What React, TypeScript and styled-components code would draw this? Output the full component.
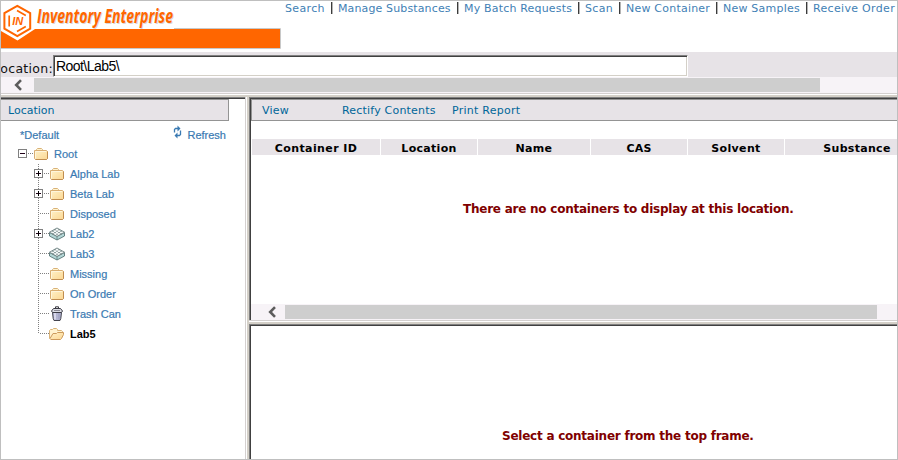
import React from "react";
import styled, { createGlobalStyle } from "styled-components";

const GlobalStyle = createGlobalStyle`
  * { box-sizing: border-box; }
  html, body { margin: 0; padding: 0; }
  body { background: #fff; overflow: hidden; }
`;

const verdana = `Verdana, "DejaVu Sans", sans-serif`;
const arial = `"Liberation Sans", Arial, sans-serif`;

const Window = styled.div`
  width: 898px;
  height: 460px;
  border: 1px solid #bfbfbf;
  background: #fff;
  display: flex;
  flex-direction: column;
  overflow: hidden;
  font-family: ${verdana};
  font-size: 11px;
`;

const Header = styled.header`
  height: 51px;
  flex: none;
  display: flex;
  justify-content: space-between;
`;

const Brand = styled.svg`
  display: block;
  flex: none;
`;

const Nav = styled.nav`
  display: flex;
  height: 14px;
  align-items: flex-start;
  padding: 1px 1px 0 0;
`;

const NavLink = styled.a<{ $width: number; $spacing: number }>`
  width: ${(p) => p.$width}px;
  letter-spacing: ${(p) => p.$spacing}px;
  line-height: 14px;
  color: #3f7fb5;
  white-space: nowrap;
`;

const Divider = styled.span`
  width: 2px;
  height: 12px;
  margin: 0 5px 0 6px;
  background: linear-gradient(to right, #3c3c3c 50%, #b4b4b4 50%);
`;

const LocationBar = styled.div`
  height: 25px;
  flex: none;
  display: flex;
  background: #e7e3e7;
  padding-top: 3px;
`;

const FieldLabel = styled.label`
  width: 52px;
  display: flex;
  justify-content: flex-end;
  overflow: hidden;
  font-size: 12.5px;
  line-height: 27px;
  letter-spacing: 0.3px;
  white-space: nowrap;
  color: #111;
`;

const Field = styled.div`
  width: 635px;
  height: 22px;
  border: 1px solid;
  border-color: #808080 #fff #fff #808080;
  box-shadow: inset 1px 1px #404040, inset -1px -1px #d4d0c8;
  background: #fff;
  padding-left: 2px;
  font: 14px/21px ${arial};
  letter-spacing: -0.55px;
  color: #000;
`;

const ScrollTrack = styled.div<{ $lead: number }>`
  height: 16px;
  flex: none;
  display: flex;
  padding: 1px 0;
  padding-left: ${(p) => p.$lead}px;
  background: #f7f3f7;
`;

const ScrollThumb = styled.div<{ $width: number; $gap: number }>`
  width: ${(p) => p.$width}px;
  margin-left: ${(p) => p.$gap}px;
  background: #cecece;
`;

const FrameRule = styled.div`
  height: 4px;
  flex: none;
  border-top: 1px solid #d4d0cf;
  border-bottom: 2px solid #d4d0c8;
  background: #fff;
`;

const Frames = styled.main`
  flex: 1;
  min-height: 0;
  display: flex;
`;

const TreeFrame = styled.aside`
  width: 244px;
  flex: none;
  border-top: 1px solid #808080;
  box-shadow: inset 0 1px #404040;
  padding-top: 1px;
`;

const FrameSplitter = styled.div`
  width: 4px;
  flex: none;
  border-left: 1px solid #d4d0cf;
  border-right: 2px solid #d4d0c8;
  background: #fff;
`;

const RightFrames = styled.div`
  flex: 1;
  min-width: 0;
  display: flex;
  flex-direction: column;
`;

const Frame = styled.section<{ $height?: number }>`
  ${(p) => (p.$height ? `height: ${p.$height}px; flex: none;` : "flex: 1;")}
  border: solid #808080;
  border-width: 1px 0 0 1px;
  box-shadow: inset 1px 1px #404040;
  padding: 1px 0 0 1px;
  display: flex;
  flex-direction: column;
`;

const TreeTitle = styled.div`
  width: 228px;
  height: 22px;
  padding-left: 7px;
  border: solid #949494;
  border-width: 1px 1px 1px 0;
  background: #e7e3e7;
  color: #006699;
  line-height: 22px;
`;

const Toolbar = styled.div`
  height: 22px;
  flex: none;
  display: flex;
  padding-left: 10px;
  border: solid #949494;
  border-width: 1px 0 1px 1px;
  background: #e7e3e7;
  color: #006699;
  line-height: 22px;
`;

const ToolItem = styled.span<{ $width: number; $spacing: number }>`
  width: ${(p) => p.$width}px;
  letter-spacing: ${(p) => p.$spacing}px;
  white-space: nowrap;
`;

const TreeActions = styled.div`
  display: flex;
  justify-content: space-between;
  height: 23px;
  padding: 4px 19px 0 19px;
  font: 11px/20px ${arial};
  color: #3a7ab2;
  -webkit-text-stroke: 0.2px;
`;

const Action = styled.a`
  display: flex;
  gap: 5px;
`;

const Tree = styled.div`
  font: 11px/20px ${arial};
  color: #3a7ab2;
`;

const TreeRow = styled.div<{ $current?: boolean }>`
  height: 20px;
  display: flex;
  white-space: nowrap;
  padding-left: 15px;
  ${(p) => (p.$current ? "color: #000; font-weight: bold;" : "-webkit-text-stroke: 0.2px;")}
`;

const TreeArt = styled.svg<{ $gap?: number }>`
  display: block;
  flex: none;
  margin-right: ${(p) => p.$gap ?? 4}px;
`;

const HeadRow = styled.div`
  display: grid;
  grid-template-columns: 128px 96px 112px 96px 96px 144px;
  column-gap: 1px;
  height: 16px;
  margin: 18px 0 0 1px;
  flex: none;
  overflow: hidden;
`;

const HeadCell = styled.div<{ $spacing: number }>`
  background: #e7e3e7;
  text-align: center;
  font-weight: bold;
  line-height: 19px;
  letter-spacing: ${(p) => p.$spacing}px;
  color: #000;
  white-space: nowrap;
`;

const Message = styled.p<{ $top: number; $left: number; $spacing: number }>`
  margin: ${(p) => p.$top}px 0 0 ${(p) => p.$left}px;
  font-size: 12px;
  line-height: 16px;
  font-weight: bold;
  letter-spacing: ${(p) => p.$spacing}px;
  color: #800000;
  white-space: nowrap;
`;

const Spacer = styled.div`
  flex: 1;
`;

const links: [string, number, number][] = [
  ["Search", 40, 0.35],
  ["Manage Substances", 113, 0.13],
  ["My Batch Requests", 108, 0.18],
  ["Scan", 28, 0.3],
  ["New Container", 84, 0.22],
  ["New Samples", 77, 0.22],
  ["Receive Order", 83, 0.32],
];

const columns: [string, number][] = [
  ["Container ID", 0.4],
  ["Location", 0.3],
  ["Name", 0.3],
  ["CAS", 0.2],
  ["Solvent", 0.35],
  ["Substance", 0.3],
];

type Kind = "folder" | "open" | "grid" | "trash";
type Node = { label: string; kind: Kind; expandable?: boolean };

const nodes: Node[] = [
  { label: "Alpha Lab", kind: "folder", expandable: true },
  { label: "Beta Lab", kind: "folder", expandable: true },
  { label: "Disposed", kind: "folder" },
  { label: "Lab2", kind: "grid", expandable: true },
  { label: "Lab3", kind: "grid" },
  { label: "Missing", kind: "folder" },
  { label: "On Order", kind: "folder" },
  { label: "Trash Can", kind: "trash" },
  { label: "Lab5", kind: "open" },
];

const FolderShape = () => (
  <g>
    <path d="M3.5 6.5V5.5L4.5 4.5H8.5L9.5 5.5V6.5" fill="#fff3cf" stroke="#d9b278" />
    <path d="M1.5 6.5H13.5L14.5 7.5V14.5L13.5 15.5H2.5L1.5 14.5Z" fill="url(#folderFill)" stroke="#d9ae72" />
    <path d="M14.5 7.5V14.5L13.5 15.5H2.5" fill="none" stroke="#c08d50" />
    <path d="M2.5 14.5V7.5H13" fill="none" stroke="#fff6dc" />
  </g>
);

const OpenShape = () => (
  <g>
    <path d="M0.5 14.5V6.5L1.5 5.5H3.5L4.5 4.5H7.5L8.5 5.5V6.5H12.5L13.5 7.5V9" fill="#fff3cf" stroke="#d9b278" />
    <path d="M1 14.5L4 9.5H7.5L8.5 8.5H14.5V10.5L12.5 14.5L11.5 15.5H1.8Z" fill="url(#folderFill)" stroke="#cc9a5c" />
  </g>
);

const GridShape = () => (
  <g>
    <path d="M0.5 8.5L8 12.5L15.5 8.5V12L8 16L0.5 12Z" fill="#b4d6d6" stroke="#587676" strokeWidth="0.9" />
    <path d="M8 12.5V16" stroke="#587676" strokeWidth="0.8" />
    <path d="M0.5 8.2L8 4L15.5 8.2L8 12.4Z" fill="#f6f9f9" stroke="#6c8080" strokeWidth="0.9" />
    <path
      d="M5 5.8h2M9 5.8h2M3 7.2h2M7 7.2h2M11 7.2h2M5 8.6h2M9 8.6h2M3 9.8h2M7 10.2h2M11 9.8h2"
      stroke="#748888"
      strokeWidth="0.9"
    />
  </g>
);

const TrashShape = () => (
  <g>
    <path d="M3.5 8.5H12.5L11.8 14.5L11 16.5H5L4.2 14.5Z" fill="#b3b5d2" stroke="#44444f" />
    <path d="M6 9V15.5" stroke="#e4e5f4" strokeWidth="1.5" />
    <path d="M10 9V15.5" stroke="#9a9cbd" />
    <path d="M2.5 7L4.5 4.5H11.5L13.5 7L12.5 8.5H3.5Z" fill="#dcdde6" stroke="#3b3b44" />
    <path d="M6.5 4.5V2.8H9.5V4.5" fill="none" stroke="#3b3b44" />
    <path d="M5 6.5H11" stroke="#8a8a96" />
  </g>
);

const shapes: Record<Kind, () => React.ReactElement> = {
  folder: FolderShape,
  open: OpenShape,
  grid: GridShape,
  trash: TrashShape,
};

const Toggle = ({ x, open }: { x: number; open?: boolean }) => (
  <g>
    <rect x={x + 0.5} y="5.5" width="8" height="8" fill="#fff" stroke="#808080" />
    <path d={`M${x + 2} 9.5h5`} stroke="#200018" />
    {!open && <path d={`M${x + 4.5} 7v5`} stroke="#000" />}
  </g>
);

const RootArt = () => (
  <TreeArt width="34" height="20" viewBox="16 0 34 20">
    <defs>
      <linearGradient id="folderFill" x1="0" y1="0" x2="1" y2="1">
        <stop offset="0" stopColor="#fff1c8" />
        <stop offset="1" stopColor="#fbd793" />
      </linearGradient>
    </defs>
    <Toggle x={18} open />
    <path d="M28 9.5h6" stroke="#808080" strokeDasharray="1 1" />
    <g transform="translate(33 0)">
      <FolderShape />
    </g>
  </TreeArt>
);

const NodeArt = ({ node, last }: { node: Node; last: boolean }) => {
  const Shape = shapes[node.kind];
  return (
    <TreeArt width="50" height="20" viewBox="16 0 50 20">
      <path d={`M38.5 0V${last ? 10 : 20}`} stroke="#808080" strokeDasharray="1 1" />
      <path d="M40 9.5h9" stroke="#808080" strokeDasharray="1 1" />
      {node.expandable && <Toggle x={34} />}
      <g transform="translate(49 0)">
        <Shape />
      </g>
    </TreeArt>
  );
};

const RefreshIcon = () => (
  <TreeArt width="9" height="15" viewBox="0 0 9 15" $gap={0} fill="none" stroke="#3a7ab2">
    <path d="M1.5 7.5V4.5L2.5 3.5H5M7.5 5.5V9.5L6.5 10.5H4" strokeWidth="1.3" />
    <path d="M4.5 0.5L7.5 3.5L4.5 6.5ZM4.5 7.5L1.5 10.5L4.5 13.5Z" fill="#3a7ab2" stroke="none" />
  </TreeArt>
);

const ScrollArrow = () => (
  <svg width="10" height="14" viewBox="0 0 10 14">
    <path d="M8 2.2L3.2 7L8 11.8" fill="none" stroke="#5c5c5c" strokeWidth="2.6" />
  </svg>
);

const BrandArt = () => (
  <Brand width="281" height="51" viewBox="1 1 281 51">
    <path d="M174 28.5H280.5V48.5H1" fill="none" stroke="#c8c8c8" />
    <rect x="1" y="29" width="279" height="19" fill="#ff6600" />
    <path d="M1 29V12L17 2L33 12V29H35L17.5 40.5L1 31Z" fill="#fff" />
    <path d="M17.3 5.8L30.2 13.2V28.6L17.3 36L4.4 28.6V13.2Z" fill="none" stroke="#ff6600" strokeWidth="2" />
    <path d="M9.2 15.5V26.5M17 10.4L25.8 15.4M17 31.6L25.8 26.6" stroke="#ff6600" strokeWidth="1.7" />
    <text x="12.3" y="25.3" fontFamily={arial} fontSize="10.5" fontWeight="bold" fontStyle="italic" fill="#ff6600" textLength="11" lengthAdjust="spacingAndGlyphs">IN</text>
    <g fontFamily={`"Open Sans", sans-serif`} fontSize="20" fontWeight="700" fontStyle="italic">
      <text x="37.8" y="23.8" fill="#d8d8d8" textLength="136" lengthAdjust="spacingAndGlyphs" aria-hidden="true">Inventory Enterprise</text>
      <text x="37" y="23" fill="#ff6600" textLength="136" lengthAdjust="spacingAndGlyphs">Inventory Enterprise</text>
    </g>
  </Brand>
);

export default function App() {
  return (
    <>
      <GlobalStyle />
      <Window>
        <Header>
          <BrandArt />
          <Nav>
            {links.map(([label, width, spacing], i) => (
              <React.Fragment key={label}>
                {i > 0 && <Divider />}
                <NavLink $width={width} $spacing={spacing}>{label}</NavLink>
              </React.Fragment>
            ))}
          </Nav>
        </Header>
        <LocationBar>
          <FieldLabel>Location:</FieldLabel>
          <Field>Root\Lab5\</Field>
        </LocationBar>
        <ScrollTrack $lead={12}>
          <ScrollArrow />
          <ScrollThumb $width={786} $gap={11} />
        </ScrollTrack>
        <FrameRule />
        <Frames>
          <TreeFrame>
            <TreeTitle>Location</TreeTitle>
            <TreeActions>
              <Action>*Default</Action>
              <Action>
                <RefreshIcon />
                Refresh
              </Action>
            </TreeActions>
            <Tree>
              <TreeRow>
                <RootArt />
                Root
              </TreeRow>
              {nodes.map((node, i) => (
                <TreeRow key={node.label} $current={node.kind === "open"}>
                  <NodeArt node={node} last={i === nodes.length - 1} />
                  {node.label}
                </TreeRow>
              ))}
            </Tree>
          </TreeFrame>
          <FrameSplitter />
          <RightFrames>
            <Frame $height={223}>
              <Toolbar>
                <ToolItem $width={80} $spacing={0.25}>View</ToolItem>
                <ToolItem $width={110} $spacing={0.2}>Rectify Contents</ToolItem>
                <ToolItem $width={80} $spacing={0.25}>Print Report</ToolItem>
              </Toolbar>
              <HeadRow>
                {columns.map(([label, spacing]) => (
                  <HeadCell key={label} $spacing={spacing}>{label}</HeadCell>
                ))}
              </HeadRow>
              <Message $top={46} $left={212} $spacing={-0.24}>
                There are no containers to display at this location.
              </Message>
              <Spacer />
              <ScrollTrack $lead={16}>
                <ScrollArrow />
                <ScrollThumb $width={592} $gap={8} />
              </ScrollTrack>
            </Frame>
            <FrameRule />
            <Frame>
              <Message $top={102} $left={251} $spacing={-0.24}>
                Select a container from the top frame.
              </Message>
            </Frame>
          </RightFrames>
        </Frames>
      </Window>
    </>
  );
}
